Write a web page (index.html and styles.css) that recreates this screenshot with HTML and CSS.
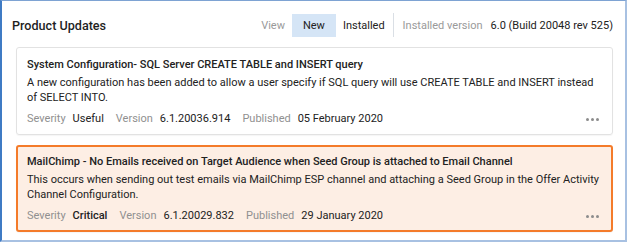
FILE: index.html
```html
<!DOCTYPE html>
<html lang="en">
<head>
  <meta charset="UTF-8">
  <title>Product Updates</title>
  <link rel="stylesheet" href="styles.css">
</head>
<body>
  <div class="frame">
    <div class="header">
      <h1>Product Updates</h1>
      <div class="toolbar">
        <span class="label">View</span>
        <span class="tab active">New</span>
        <span class="tab">Installed</span>
        <span class="divider"></span>
        <span class="label">Installed version</span>
        <span class="value">6.0 (Build 20048 rev 525)</span>
      </div>
    </div>

    <div class="update">
      <div class="update-title">System Configuration- SQL Server CREATE TABLE and INSERT query</div>
      <div class="update-desc">A new configuration has been added to allow a user specify if SQL query will use CREATE TABLE and INSERT instead of SELECT INTO.</div>
      <div class="meta">
        <span class="label">Severity</span><span class="value">Useful</span>
        <span class="label">Version</span><span class="value">6.1.20036.914</span>
        <span class="label">Published</span><span class="value">05 February 2020</span>
        <span class="more"><i></i><i></i><i></i></span>
      </div>
    </div>

    <div class="update critical">
      <div class="update-title">MailChimp - No Emails received on Target Audience when Seed Group is attached to Email Channel</div>
      <div class="update-desc">This occurs when sending out test emails via MailChimp ESP channel and attaching a Seed Group in the Offer Activity Channel Configuration.</div>
      <div class="meta">
        <span class="label">Severity</span><span class="value strong">Critical</span>
        <span class="label">Version</span><span class="value">6.1.20029.832</span>
        <span class="label">Published</span><span class="value">29 January 2020</span>
        <span class="more"><i></i><i></i><i></i></span>
      </div>
    </div>
  </div>
</body>
</html>
```

FILE: styles.css
```css
* {
  box-sizing: border-box;
  margin: 0;
  padding: 0;
}

body {
  font-family: Roboto, "Liberation Sans", sans-serif;
  color: #222;
  background: #fff;
}

.frame {
  width: 627px;
  height: 242px;
  border-top: 1px solid #7ea3d3;
  border-left: 2px solid #3f7bc4;
  border-right: 2px solid #a8c1e2;
  border-bottom: 2px solid #a8c1e2;
  padding: 0 12px 0 14px;
}

.header {
  display: flex;
  align-items: center;
  justify-content: space-between;
  height: 46px;
  padding-top: 2px;
}

.header h1 {
  font-size: 12.6px;
  font-weight: 500;
  margin-left: -4px;
  margin-top: 1px;
  color: #1f1f1f;
}

.toolbar {
  display: flex;
  align-items: center;
  font-size: 11px;
}

.toolbar .label {
  color: #9a9a9a;
}

.toolbar .tab {
  padding: 0 7px;
  line-height: 23px;
}

.toolbar .label + .tab {
  margin-left: 7px;
}

.toolbar .tab.active {
  background: #d5e5f6;
  padding: 0 11px;
}

.divider {
  width: 1px;
  height: 24px;
  background: #dadfe5;
  margin: 0 9px 0 1px;
}

.toolbar .value {
  margin-left: 8px;
  color: #222;
}

.update {
  border: 1px solid #e2e2e2;
  border-radius: 3px;
  padding: 9px 12px 7px 10px;
  margin-bottom: 10px;
  box-shadow: 0 1px 1px rgba(0, 0, 0, 0.04);
}

.update.critical {
  background: #fdeee4;
  border: 2px solid #f47b2a;
  padding: 7px 11px 6px 9px;
}

.update-title {
  font-size: 11px;
  font-weight: 500;
  line-height: 16px;
}

.update-desc {
  font-size: 11px;
  line-height: 15px;
  margin-top: 2px;
}

.meta {
  display: flex;
  align-items: center;
  font-size: 11px;
  line-height: 16px;
  margin-top: 6px;
}

.meta .label {
  color: #909090;
  margin-right: 7px;
}

.meta .value {
  margin-right: 12px;
}

.meta .value.strong {
  font-weight: 500;
}

.more {
  margin-left: auto;
  display: flex;
  gap: 2px;
  margin-right: 1px;
}

.more i {
  width: 3px;
  height: 3px;
  border-radius: 50%;
  background: #8c8c8c;
}
```
